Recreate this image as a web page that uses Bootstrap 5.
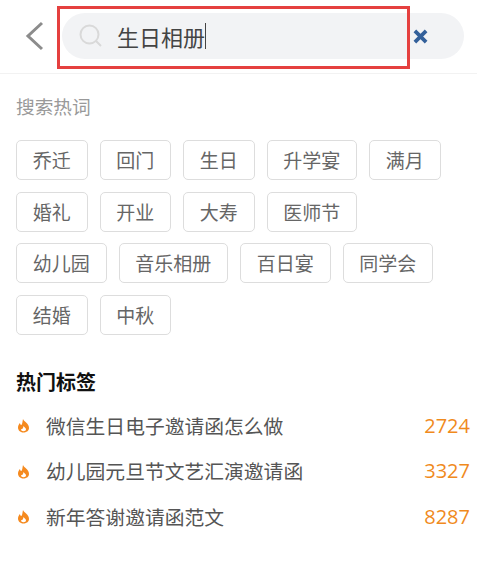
<!DOCTYPE html>
<html lang="zh-CN">
<head>
    <meta charset="UTF-8">
    <meta name="viewport" content="width=device-width, initial-scale=1.0">
    <title>搜索</title>
    <link rel="stylesheet" href="https://cdn.jsdelivr.net/npm/bootstrap@5.3.0/dist/css/bootstrap.min.css">
    <style>
        body { font-family: "Noto Sans CJK SC", "Liberation Sans", sans-serif; background: #fff; color: #555; }
        .top-bar { height: 74px; padding: 13px 13px 0 24px; border-bottom: 1px solid #f2f2f2; }
        .back-btn { width: 38px; height: 46px; }
        .search-pill { height: 46px; background: #f2f3f5; border-radius: 23px; padding-left: 17px; padding-right: 36px; }
        .search-word { font-size: 22px; color: #444; margin-left: 14px; line-height: 46px; }
        .caret-line { width: 1px; height: 26px; background: #444; }
        .red-box { position: absolute; left: 57px; top: 6px; width: 353px; height: 63px; border: 3px solid #e5403f; }
        .hot-title { font-size: 18.7px; color: #999; margin: 20px 0 0 16px; line-height: 24px; }
        .tag-wrap { margin: 22px 30px 0 16px; column-gap: 12px; row-gap: 11.67px; }
        .tag-item { height: 40px; padding: 0 15.75px; border: 1px solid #ddd; border-radius: 5px; font-size: 19px; line-height: 38px; color: #666; white-space: nowrap; }
        .label-title { font-size: 20px; font-weight: 700; color: #111; margin: 34px 0 0 16px; line-height: 26px; }
        .hot-list { margin: 8px 7px 0 16px; }
        .hot-row { height: 45.5px; }
        .hot-text { font-size: 19.8px; color: #555; margin-left: 15px; }
        .hot-num { font-family: "Open Sans", "Liberation Sans", sans-serif; font-size: 20px; color: #f08a1d; }
    </style>
</head>
<body>
    <div class="top-bar d-flex align-items-start">
        <div class="back-btn d-flex align-items-center flex-shrink-0">
            <svg width="22" height="30" viewBox="0 0 22 30"><path d="M18 2 L4 15 L18 28" fill="none" stroke="#8c8c8c" stroke-width="3"/></svg>
        </div>
        <div class="search-pill flex-grow-1 d-flex align-items-center">
            <svg width="24" height="24" viewBox="0 0 24 24"><circle cx="10.500" cy="10.500" r="9" fill="none" stroke="#d9d9d9" stroke-width="2"/><path d="M17 17 L22 22" stroke="#d9d9d9" stroke-width="2"/></svg>
            <span class="search-word">生日相册</span>
            <span class="caret-line"></span>
            <svg class="ms-auto" width="15" height="15" viewBox="0 0 16 16"><path d="M2 2 L14 14 M14 2 L2 14" stroke="#33609a" stroke-width="4"/></svg>
        </div>
    </div>
    <div class="red-box"></div>

    <div class="hot-title">搜索热词</div>
    <div class="tag-wrap d-flex flex-wrap">
        <span class="tag-item">乔迁</span>
        <span class="tag-item">回门</span>
        <span class="tag-item">生日</span>
        <span class="tag-item">升学宴</span>
        <span class="tag-item">满月</span>
        <span class="tag-item">婚礼</span>
        <span class="tag-item">开业</span>
        <span class="tag-item">大寿</span>
        <span class="tag-item">医师节</span>
        <span class="tag-item">幼儿园</span>
        <span class="tag-item">音乐相册</span>
        <span class="tag-item">百日宴</span>
        <span class="tag-item">同学会</span>
        <span class="tag-item">结婚</span>
        <span class="tag-item">中秋</span>
    </div>

    <div class="label-title">热门标签</div>
    <div class="hot-list">
        <div class="hot-row d-flex align-items-center">
            <svg width="15" height="15" viewBox="0 0 15 15"><path d="M7 1 C8 4 13 5 13 10 C13 13 10 14.500 7.500 14.500 C4 14.500 2 12 2 9.500 C2 7.500 3 6 4 5 C4 6 4.500 7 5.500 7 C6.500 5.500 6.500 3 7 1 Z" fill="#f58a1f"/><path d="M7.500 8 C8.500 9.500 10 10 10 11.500 C10 12.800 8.800 13.200 7.500 13.200 C6 13.200 5 12.500 5 11.300 C6.500 11.300 7.300 10 7.500 8 Z" fill="#fff"/></svg>
            <span class="hot-text">微信生日电子邀请函怎么做</span>
            <span class="hot-num ms-auto">2724</span>
        </div>
        <div class="hot-row d-flex align-items-center">
            <svg width="15" height="15" viewBox="0 0 15 15"><path d="M7 1 C8 4 13 5 13 10 C13 13 10 14.500 7.500 14.500 C4 14.500 2 12 2 9.500 C2 7.500 3 6 4 5 C4 6 4.500 7 5.500 7 C6.500 5.500 6.500 3 7 1 Z" fill="#f58a1f"/><path d="M7.500 8 C8.500 9.500 10 10 10 11.500 C10 12.800 8.800 13.200 7.500 13.200 C6 13.200 5 12.500 5 11.300 C6.500 11.300 7.300 10 7.500 8 Z" fill="#fff"/></svg>
            <span class="hot-text">幼儿园元旦节文艺汇演邀请函</span>
            <span class="hot-num ms-auto">3327</span>
        </div>
        <div class="hot-row d-flex align-items-center">
            <svg width="15" height="15" viewBox="0 0 15 15"><path d="M7 1 C8 4 13 5 13 10 C13 13 10 14.500 7.500 14.500 C4 14.500 2 12 2 9.500 C2 7.500 3 6 4 5 C4 6 4.500 7 5.500 7 C6.500 5.500 6.500 3 7 1 Z" fill="#f58a1f"/><path d="M7.500 8 C8.500 9.500 10 10 10 11.500 C10 12.800 8.800 13.200 7.500 13.200 C6 13.200 5 12.500 5 11.300 C6.500 11.300 7.300 10 7.500 8 Z" fill="#fff"/></svg>
            <span class="hot-text">新年答谢邀请函范文</span>
            <span class="hot-num ms-auto">8287</span>
        </div>
    </div>

    <script src="https://cdn.jsdelivr.net/npm/bootstrap@5.3.0/dist/js/bootstrap.bundle.min.js"></script>
</body>
</html>
